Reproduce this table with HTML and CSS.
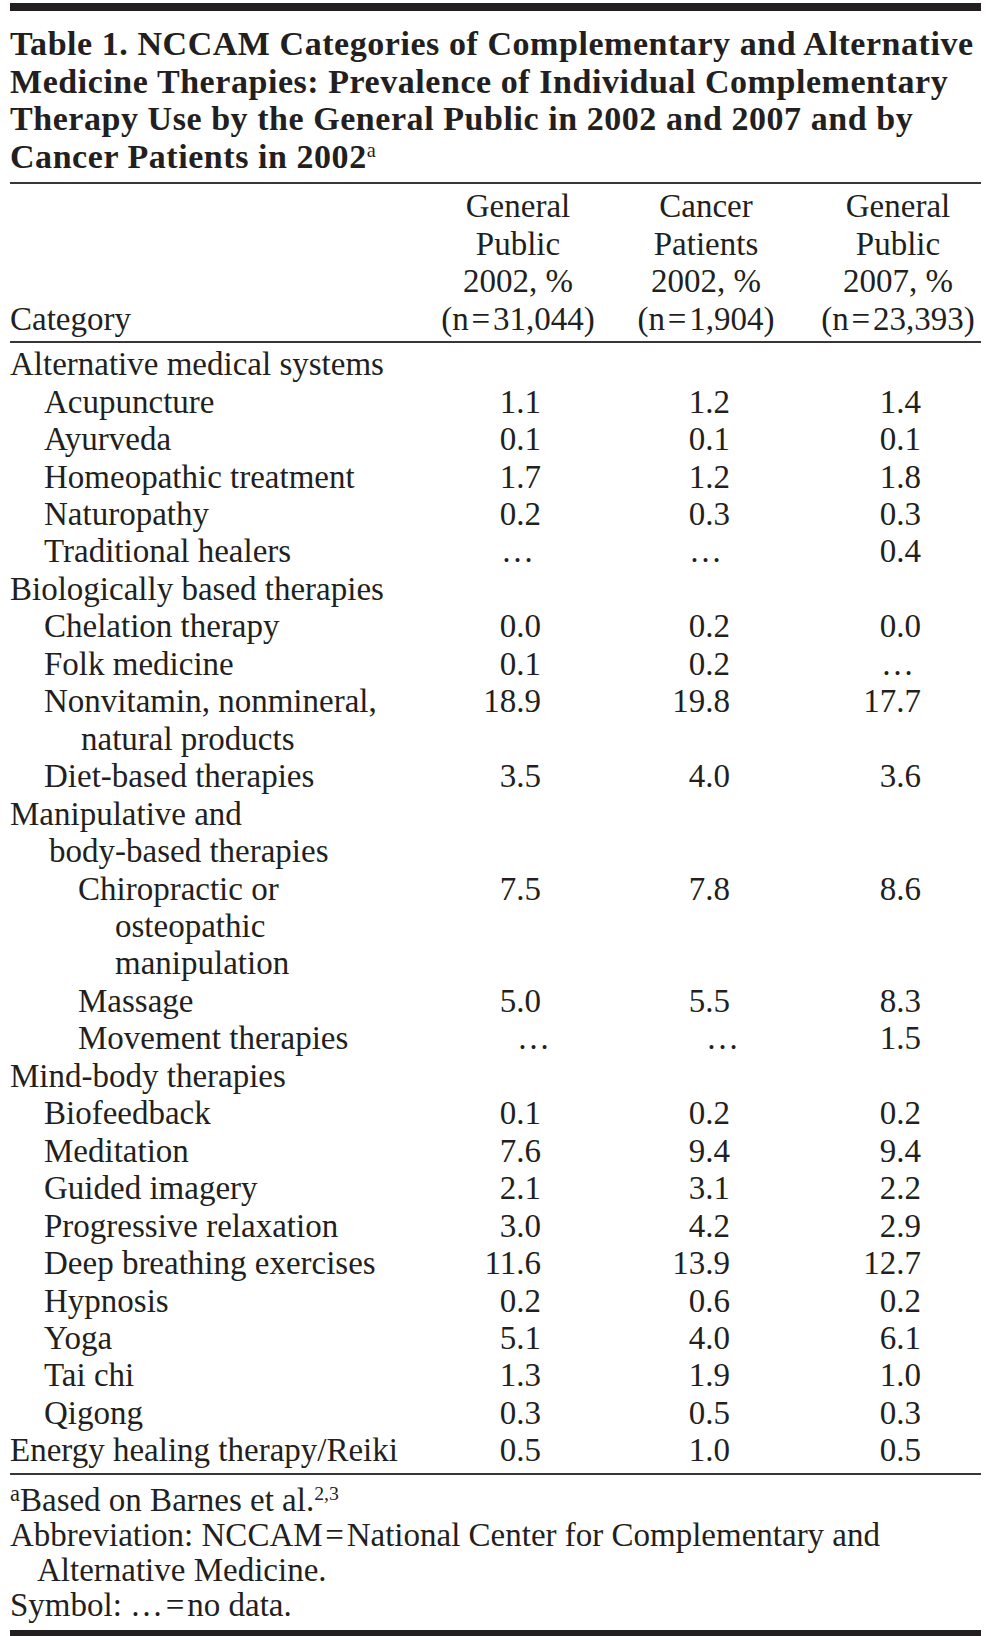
FILE: index.html
```html
<!DOCTYPE html>
<html lang="en">
<head>
<meta charset="utf-8">
<title>Table 1. NCCAM Categories</title>
<link rel="stylesheet" href="styles.css">
</head>
<body>
<div class="sheet">
  <div class="bar"></div>
  <h1 class="title">Table 1. NCCAM Categories of Complementary and Alternative<br>Medicine Therapies: Prevalence of Individual Complementary<br>Therapy Use by the General Public in 2002 and 2007 and by<br>Cancer Patients in 2002<sup>a</sup></h1>
  <table class="data">
    <colgroup>
      <col class="c-cat"><col class="c-1"><col class="c-2"><col class="c-3">
    </colgroup>
    <thead>
      <tr>
        <th class="cat">Category</th>
        <th>General<br>Public<br>2002, %<br>(n&#8202;=&#8202;31,044)</th>
        <th>Cancer<br>Patients<br>2002, %<br>(n&#8202;=&#8202;1,904)</th>
        <th>General<br>Public<br>2007, %<br>(n&#8202;=&#8202;23,393)</th>
      </tr>
    </thead>
    <tbody>
      <tr><td class="cat l0">Alternative medical systems</td><td></td><td></td><td></td></tr>
      <tr><td class="cat l1">Acupuncture</td><td class="n1">1.1</td><td class="n2">1.2</td><td class="n3">1.4</td></tr>
      <tr><td class="cat l1">Ayurveda</td><td class="n1">0.1</td><td class="n2">0.1</td><td class="n3">0.1</td></tr>
      <tr><td class="cat l1">Homeopathic treatment</td><td class="n1">1.7</td><td class="n2">1.2</td><td class="n3">1.8</td></tr>
      <tr><td class="cat l1">Naturopathy</td><td class="n1">0.2</td><td class="n2">0.3</td><td class="n3">0.3</td></tr>
      <tr><td class="cat l1">Traditional healers</td><td class="n1 nd">…</td><td class="n2 nd">…</td><td class="n3">0.4</td></tr>
      <tr><td class="cat l0">Biologically based therapies</td><td></td><td></td><td></td></tr>
      <tr><td class="cat l1">Chelation therapy</td><td class="n1">0.0</td><td class="n2">0.2</td><td class="n3">0.0</td></tr>
      <tr><td class="cat l1">Folk medicine</td><td class="n1">0.1</td><td class="n2">0.2</td><td class="n3 nd">…</td></tr>
      <tr><td class="cat l1 hang">Nonvitamin, nonmineral,<br>natural products</td><td class="n1">18.9</td><td class="n2">19.8</td><td class="n3">17.7</td></tr>
      <tr><td class="cat l1">Diet-based therapies</td><td class="n1">3.5</td><td class="n2">4.0</td><td class="n3">3.6</td></tr>
      <tr><td class="cat l0 hang0">Manipulative and<br>body-based therapies</td><td></td><td></td><td></td></tr>
      <tr><td class="cat l2 hang">Chiropractic or<br>osteopathic<br>manipulation</td><td class="n1">7.5</td><td class="n2">7.8</td><td class="n3">8.6</td></tr>
      <tr><td class="cat l2">Massage</td><td class="n1">5.0</td><td class="n2">5.5</td><td class="n3">8.3</td></tr>
      <tr><td class="cat l2">Movement therapies</td><td class="n1 nd shift">…</td><td class="n2 nd shift">…</td><td class="n3">1.5</td></tr>
      <tr><td class="cat l0">Mind-body therapies</td><td></td><td></td><td></td></tr>
      <tr><td class="cat l1">Biofeedback</td><td class="n1">0.1</td><td class="n2">0.2</td><td class="n3">0.2</td></tr>
      <tr><td class="cat l1">Meditation</td><td class="n1">7.6</td><td class="n2">9.4</td><td class="n3">9.4</td></tr>
      <tr><td class="cat l1">Guided imagery</td><td class="n1">2.1</td><td class="n2">3.1</td><td class="n3">2.2</td></tr>
      <tr><td class="cat l1">Progressive relaxation</td><td class="n1">3.0</td><td class="n2">4.2</td><td class="n3">2.9</td></tr>
      <tr><td class="cat l1">Deep breathing exercises</td><td class="n1">11.6</td><td class="n2">13.9</td><td class="n3">12.7</td></tr>
      <tr><td class="cat l1">Hypnosis</td><td class="n1">0.2</td><td class="n2">0.6</td><td class="n3">0.2</td></tr>
      <tr><td class="cat l1">Yoga</td><td class="n1">5.1</td><td class="n2">4.0</td><td class="n3">6.1</td></tr>
      <tr><td class="cat l1">Tai chi</td><td class="n1">1.3</td><td class="n2">1.9</td><td class="n3">1.0</td></tr>
      <tr><td class="cat l1">Qigong</td><td class="n1">0.3</td><td class="n2">0.5</td><td class="n3">0.3</td></tr>
      <tr><td class="cat l0">Energy healing therapy/Reiki</td><td class="n1">0.5</td><td class="n2">1.0</td><td class="n3">0.5</td></tr>
    </tbody>
  </table>
  <div class="notes">
    <p class="note"><sup class="fn">a</sup>Based on Barnes et al.<sup>2,3</sup></p>
    <p class="note hang-note">Abbreviation: NCCAM&#8202;=&#8202;National Center for Complementary and<br>Alternative Medicine.</p>
    <p class="note">Symbol: …&#8202;=&#8202;no data.</p>
  </div>
  <div class="bar bottom"></div>
</div>
</body>
</html>
```

FILE: styles.css
```css
html, body {
  margin: 0;
  padding: 0;
  background: #ffffff;
}

body {
  color: #231f20;
  font-family: "Liberation Serif", "Times New Roman", serif;
  font-size: 33px;
}

.sheet {
  width: 971px;
  margin: 0 10px;
  padding-top: 3px;
}

.bar {
  height: 8px;
  background: #231f20;
}

.bar.bottom {
  height: 7px;
  margin-top: 7px;
}

.title {
  margin: 0;
  padding: 14px 0 7px;
  font-size: 34px;
  font-weight: bold;
  letter-spacing: 0.55px;
  line-height: 37.6px;
  border-bottom: 2px solid #3a3637;
}

.title sup,
.note sup {
  font-size: 0.6em;
  line-height: 0;
  vertical-align: 0.55em;
  font-weight: normal;
  letter-spacing: 0;
}

.note sup.fn {
  font-size: 0.68em;
  vertical-align: 0.45em;
}

.data {
  width: 971px;
  border-collapse: collapse;
  table-layout: fixed;
  line-height: 37.45px;
}

.c-cat { width: 429px; }
.c-1 { width: 158px; }
.c-2 { width: 218px; }
.c-3 { width: 166px; }

.data th {
  font-weight: normal;
  text-align: center;
  vertical-align: bottom;
  padding: 4px 0 3px;
  border-bottom: 2px solid #3a3637;
  white-space: nowrap;
}

.data th.cat {
  text-align: left;
}

.data td {
  padding: 0;
  vertical-align: top;
  white-space: nowrap;
}

.data tbody tr:first-child td {
  padding-top: 3px;
}

.data tbody tr:last-child td {
  padding-bottom: 3px;
  border-bottom: 2px solid #3a3637;
}

.cat {
  text-align: left;
}

.l0 { padding-left: 0; }
.l1 { padding-left: 34px !important; }
.l2 { padding-left: 68px !important; }

.hang {
  padding-left: 71px !important;
  text-indent: -37px;
}

.l2.hang {
  padding-left: 105px !important;
  text-indent: -37px;
}

.hang0 {
  padding-left: 39px !important;
  text-indent: -39px;
}

.n1, .n2, .n3 {
  text-align: right;
}

.n1 { padding-right: 56px !important; }
.n2 { padding-right: 85px !important; }
.n3 { padding-right: 60px !important; }

.n1.nd { padding-right: 63px !important; }
.n2.nd { padding-right: 93px !important; }
.n3.nd { padding-right: 67px !important; }

.n1.nd.shift { padding-right: 47px !important; }
.n2.nd.shift { padding-right: 76px !important; }

.notes {
  padding-top: 8px;
}

.note {
  margin: 0;
  line-height: 35px;
}

.hang-note {
  padding-left: 27px;
  text-indent: -27px;
}
```
